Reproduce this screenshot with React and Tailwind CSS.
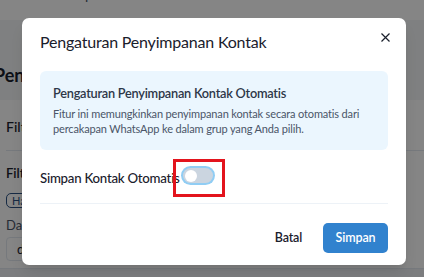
import React, { useState } from "react";

function Toggle({ checked, onChange }) {
  return (
    <button
      type="button"
      role="switch"
      aria-checked={checked}
      onClick={() => onChange(!checked)}
      className={
        "relative flex h-[15px] w-[30px] items-center rounded-full p-[1.5px] ring-2 ring-[#90cdf4] " +
        (checked ? "bg-[#3182ce] justify-end" : "bg-[#cbd5e0] justify-start")
      }
    >
      <span className="block h-[12px] w-[12px] rounded-full bg-white" />
    </button>
  );
}

export default function App() {
  const [autoSave, setAutoSave] = useState(false);

  return (
    <div
      className="relative h-[277px] w-[424px] overflow-hidden bg-[#f4f6f8] text-[#1a202c]"
      style={{ fontFamily: "Lato, 'Open Sans', sans-serif" }}
    >
      {/* page behind the dialog */}
      <div className="flow-root h-[20px] overflow-hidden bg-white px-[62px]">
        <div className="-mt-[14px] text-[14px] leading-[18px] text-[#4a5568]">Grup</div>
      </div>
      <div className="flow-root h-[80px] pt-[43px]">
        <div className="-ml-[6px] text-[18px] font-bold leading-[24px]">Pengaturan Grup</div>
      </div>
      <div className="flow-root h-[168px] bg-white pl-[6px]">
        <div className="pt-[17px] text-[14px] font-medium leading-[20px]">Filter Kontak</div>
        <div className="mt-[13px] border-t border-[#e2e8f0]" />
        <div className="pt-[13px] text-[13px] font-semibold leading-[18px]">Filter Grup</div>
        <div className="mt-[11px] w-fit rounded-[5px] border border-[#2c5282] px-[5px] text-[11px] leading-[13px] text-[#2c5282]">
          Hari ini
        </div>
        <div className="mt-[8px] text-[13px] leading-[18px] text-[#4a5568]">Dari tanggal</div>
        <div className="mt-[3px] h-[24px] w-[200px] rounded-[4px] border border-[#e2e8f0] px-[10px] text-[13px] leading-[22px]">
          dd/mm/yyyy
        </div>
      </div>
      <div className="h-[9px] border-t border-[#e2e8f0] bg-[#edf0f3]" />

      {/* overlay */}
      <div className="absolute inset-0 bg-black/[0.48]" />

      {/* dialog */}
      <div className="absolute inset-0 flex justify-start pl-[22px] pt-[18px]">
        <div className="relative h-[247px] w-[384px] rounded-[7px] bg-white shadow-lg">
          <div className="h-[53px] px-[18px] pt-[13px]">
            <h2 className="text-[16px] font-normal leading-[22px] tracking-[-0.2px] text-[#1a202c]">
              Pengaturan Penyimpanan Kontak
            </h2>
          </div>
          <button
            type="button"
            className="absolute right-[14px] top-[12px] flex h-[14px] w-[14px] items-center justify-center text-[#1a202c]"
            aria-label="Tutup"
          >
            <svg width="9" height="9" viewBox="0 0 9 9" fill="none">
              <path d="M0.5 0.5L8.5 8.5M8.5 0.5L0.5 8.5" stroke="currentColor" strokeWidth="1.2" />
            </svg>
          </button>

          <div className="px-[18px]">
            <div className="h-[79px] rounded-[6px] bg-[#ebf6fe] px-[13px] pt-[12px]">
              <div className="text-[12.75px] font-semibold leading-[20px] tracking-[-0.25px] text-[#2d3748]">
                Pengaturan Penyimpanan Kontak Otomatis
              </div>
              <p className="mt-[3px] text-[11px] leading-[15px] tracking-[-0.15px] text-[#4a5568]">
                Fitur ini memungkinkan penyimpanan kontak secara otomatis dari percakapan WhatsApp ke
                dalam grup yang Anda pilih.
              </p>
            </div>

            <div className="flex h-[54px] items-start border-b border-[#edf2f7] pt-[18px]">
              <label className="w-[143px] whitespace-nowrap text-[13.25px] font-medium leading-[20px] tracking-[-0.25px] text-[#1a202c]">
                Simpan Kontak Otomatis
              </label>
              <div className="relative">
                <Toggle checked={autoSave} onChange={setAutoSave} />
                <div className="pointer-events-none absolute -left-[10px] -top-[9px] h-[38px] w-[52px] border-[3.5px] border-[#e3141d]" />
              </div>
            </div>

            <div className="flex items-center justify-end pt-[19px]">
              <button
                type="button"
                className="mr-[21px] text-[12.5px] font-semibold leading-[30px] tracking-[-0.2px] text-[#1a202c]"
              >
                Batal
              </button>
              <button
                type="button"
                className="h-[30px] w-[65px] rounded-[5px] bg-[#3182ce] text-[12.5px] font-semibold tracking-[-0.1px] text-white"
              >
                Simpan
              </button>
            </div>
          </div>
        </div>
      </div>
    </div>
  );
}
